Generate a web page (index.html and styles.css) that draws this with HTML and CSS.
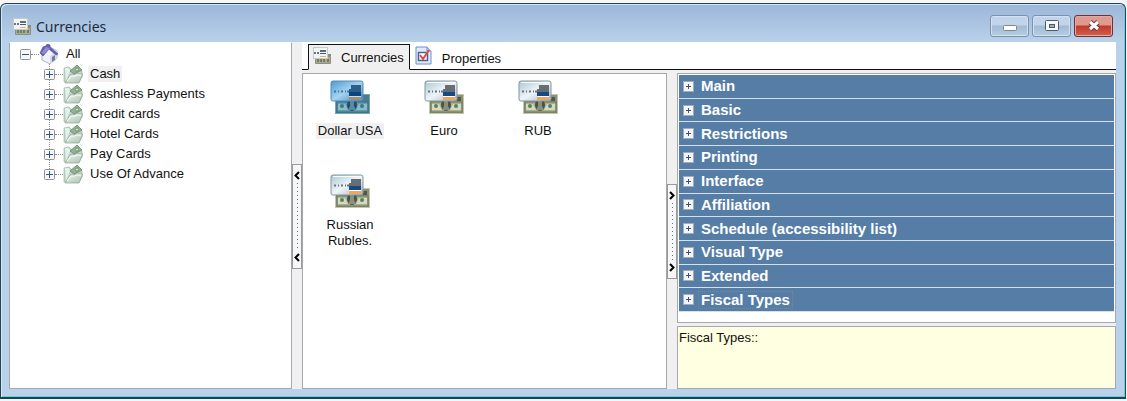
FILE: index.html
```html
<!DOCTYPE html>
<html lang="en">
<head>
<meta charset="utf-8">
<title>Currencies</title>
<link rel="stylesheet" href="styles.css">
</head>
<body>
<svg class="defs" aria-hidden="true">
  <defs>
    <linearGradient id="card" x1="0" y1="0" x2="1" y2="1"><stop offset="0" stop-color="#a9c6d4"/><stop offset=".5" stop-color="#eef5f8"/><stop offset="1" stop-color="#a9b2ba"/></linearGradient>
    <linearGradient id="cardBlue" x1="0" y1="0" x2="1" y2="1"><stop offset="0" stop-color="#4b9bd0"/><stop offset=".5" stop-color="#a6d3f1"/><stop offset="1" stop-color="#4682b2"/></linearGradient>
    <linearGradient id="leaf" x1="0" y1="0" x2="1" y2="1"><stop offset="0" stop-color="#eef5ee"/><stop offset="1" stop-color="#a9c2b0"/></linearGradient>
    <symbol id="money" viewBox="0 0 40 36">
      <rect x="5.500" y="14.500" width="34" height="19" fill="#8a917a" stroke="#c4c7ae"/>
      <rect x="7" y="22" width="31" height="10" fill="#a9b08f" stroke="#6b765e"/>
      <path d="M8 24h7l3 6H8zM37 24h-8l-3 6h11z" fill="#d3dabf"/>
      <ellipse cx="22" cy="25" rx="5" ry="6" fill="#4a524a"/><path d="M20 21h4v5l2 4h-8l2-4z" fill="#8b927c"/>
      <circle cx="12" cy="26" r="2" fill="#598058"/><circle cx="32" cy="26" r="2" fill="#598058"/>
      <path d="M33 17h4v4h-4z" fill="#4f5949"/>
      <rect x="1" y="1" width="32" height="20" rx="2" fill="url(#card)" stroke="#84979f"/>
      <path d="M3 2.500h28" stroke="#f7fbfc"/>
      <path d="M4 11.500h2m2 0h1m2 0h2m2 0h1m1 0h2" stroke="#6a747c" stroke-width="2"/>
      <path d="M21 5h10v6H21zM19 9h12v3H19z" fill="#676d74"/><path d="M19 12h12v4H19z" fill="#164a83"/><path d="M19 17h12v3H19z" fill="#eea75b"/><path d="M19 16.500h12" stroke="#fff"/>
    </symbol>
    <symbol id="moneyBlue" viewBox="0 0 40 36">
      <rect x="5.500" y="14.500" width="34" height="19" fill="#477b91" stroke="#78a5b4"/>
      <rect x="7" y="22" width="31" height="10" fill="#659bad" stroke="#3c6d85"/>
      <path d="M8 24h7l3 6H8zM37 24h-8l-3 6h11z" fill="#8bbac8"/>
      <ellipse cx="22" cy="25" rx="5" ry="6" fill="#214c6b"/><path d="M20 21h4v5l2 4h-8l2-4z" fill="#588aa2"/>
      <circle cx="12" cy="26" r="2" fill="#3b7982"/><circle cx="32" cy="26" r="2" fill="#3b7982"/>
      <rect x="1" y="1" width="32" height="20" rx="2" fill="url(#cardBlue)" stroke="#4f8eb6"/>
      <path d="M4 11.500h2m2 0h1m2 0h2m2 0h1m1 0h2" stroke="#3f76a0" stroke-width="2"/>
      <path d="M21 5h10v6H21zM19 9h12v3H19z" fill="#2e5f88"/><path d="M19 12h12v4H19z" fill="#0a4683"/><path d="M19 17h12v3H19z" fill="#a78e70"/><path d="M19 16.500h12" stroke="#bce0f5"/>
    </symbol>
    <symbol id="moneySmall" viewBox="0 0 20 18">
      <path d="M3.500 9.500h15v7h-15z" fill="#a9ac90" stroke="#8d917c"/><path d="M6 12v3m3-3v3m3-3v3m4-3v3" stroke="#636b5c" stroke-width="1.500"/>
      <rect x="1.500" y=".5" width="14" height="11" fill="#f1f4f4" stroke="#c3cacc"/>
      <path d="M2 6h6" stroke="#46515b" stroke-width="1.500" stroke-dasharray="2 1"/><path d="M8 3h6v2H8z" fill="#626c73"/><path d="M8 6h6v1H8z" fill="#315e92"/><path d="M8 9.500h6" stroke="#e2b06f"/><path d="M16 7h3v2h-3z" fill="#8a8f74"/>
    </symbol>
    <symbol id="folder" viewBox="0 0 20 20">
      <path d="M1 18V4l5-1 3 3 5-5 5 6v6l-3 5z" fill="#c3d3c6" stroke="#a3b8aa" stroke-width=".7"/>
      <path d="m7 7 7-6 5 5-8 4z" fill="#93b394" stroke="#6c8a6f" stroke-width=".8"/><circle cx="14" cy="5.500" r="1.600" fill="#d7e4cf" stroke="#60775e" stroke-width=".7"/>
      <path d="M2 4h4l1 3-4 10z" fill="#e0f3ef"/>
      <path d="m2 19 5-8h4l1-1h8l-4 9z" fill="url(#leaf)" stroke="#8aa592" stroke-width=".7"/>
      <path d="m4 17 4-5h4l1-1h5" fill="none" stroke="#fff"/>
    </symbol>
    <symbol id="plus" viewBox="0 0 11 11"><rect x=".5" y=".5" width="10" height="10" rx="1" fill="#f5f6f8" stroke="#929292"/><path d="M2 5.500h7M5.500 2v7" stroke="#34508d"/></symbol>
    <symbol id="minus" viewBox="0 0 11 11"><rect x=".5" y=".5" width="10" height="10" rx="1" fill="#f5f6f8" stroke="#929292"/><path d="M2 5.500h7" stroke="#34508d"/></symbol>
    <symbol id="box" viewBox="0 0 11 11"><path d="M0 0h11v11H0z" fill="#a3abb8"/><path d="M1 1h9v9H1z" fill="#f4f4f5"/><path d="M3 5.500h5M5.500 3v5" stroke="#3d5282"/></symbol>
  </defs>
</svg>
<main class="window">
  <header class="titlebar">
    <svg class="icon-small"><use href="#moneySmall"/></svg>
    <h1 class="title">Currencies</h1>
    <div class="controls">
      <button class="control" aria-label="Minimize"><svg viewBox="0 0 16 14"><rect x="1.500" y="6.500" width="13" height="5" rx="1" fill="#fff" stroke="#7b858f"/></svg></button>
      <button class="control" aria-label="Maximize"><svg viewBox="0 0 16 14"><rect x="1.500" y="1.500" width="13" height="10" rx="1" fill="#f6f6f6" stroke="#4e5967"/><rect x="5.500" y="5.500" width="5" height="3" fill="#94aec8" stroke="#4e5967"/></svg></button>
      <button class="control close" aria-label="Close"><svg viewBox="0 0 16 14"><path d="m4 3 8 7m0-7-8 7" stroke="#633d46" stroke-width="5"/><path d="m4 3 8 7m0-7-8 7" stroke="#fff" stroke-width="3"/></svg></button>
    </div>
  </header>
  <div class="content">
    <nav class="panel tree" aria-label="Currency groups">
      <div class="tree-row">
        <button class="expander" aria-label="Collapse All"><svg><use href="#minus"/></svg></button><span class="dots"></span>
        <svg class="tree-icon" viewBox="0 0 20 20"><path d="M3 9v7l8 4 7-6V7l-7-4z" fill="#f1f2f8" stroke="#9197b5" stroke-width=".7"/><path d="m11 12 7-6v8l-7 6z" fill="#d6d9e8"/><path d="m13 13 3-2v5l-3 2z" fill="#777b9b"/><path d="M1 9 4 3l3-1 1-2 3 1v2l8 7-2 1-7-6-6 7z" fill="#635fae" stroke="#5554a0" stroke-width=".7"/><path d="m2 9 5-6 4 1-6 6z" fill="#918cd1"/></svg>
        <span class="label">All</span>
      </div>
      <ul class="branch">
        <li class="tree-row"><button class="expander" aria-label="Expand Cash"><svg><use href="#plus"/></svg></button><span class="dots"></span><svg class="tree-icon"><use href="#folder"/></svg><span class="label selected">Cash</span></li>
        <li class="tree-row"><button class="expander" aria-label="Expand Cashless Payments"><svg><use href="#plus"/></svg></button><span class="dots"></span><svg class="tree-icon"><use href="#folder"/></svg><span class="label">Cashless Payments</span></li>
        <li class="tree-row"><button class="expander" aria-label="Expand Credit cards"><svg><use href="#plus"/></svg></button><span class="dots"></span><svg class="tree-icon"><use href="#folder"/></svg><span class="label">Credit cards</span></li>
        <li class="tree-row"><button class="expander" aria-label="Expand Hotel Cards"><svg><use href="#plus"/></svg></button><span class="dots"></span><svg class="tree-icon"><use href="#folder"/></svg><span class="label">Hotel Cards</span></li>
        <li class="tree-row"><button class="expander" aria-label="Expand Pay Cards"><svg><use href="#plus"/></svg></button><span class="dots"></span><svg class="tree-icon"><use href="#folder"/></svg><span class="label">Pay Cards</span></li>
        <li class="tree-row"><button class="expander" aria-label="Expand Use Of Advance"><svg><use href="#plus"/></svg></button><span class="dots"></span><svg class="tree-icon"><use href="#folder"/></svg><span class="label">Use Of Advance</span></li>
      </ul>
    </nav>
    <div class="splitter splitter-left">
      <button class="grip" aria-label="Hide groups"><svg class="arrow" viewBox="0 0 6 9"><path d="M5 1 1.500 4.500 5 8" fill="none" stroke="#000" stroke-width="2"/></svg><span class="grip-dots"></span><svg class="arrow" viewBox="0 0 6 9"><path d="M5 1 1.500 4.500 5 8" fill="none" stroke="#000" stroke-width="2"/></svg></button>
    </div>
    <section class="main">
      <div class="tabs" role="tablist">
        <button class="tab active" role="tab" aria-selected="true"><svg class="icon-small"><use href="#moneySmall"/></svg>Currencies</button>
        <button class="tab" role="tab" aria-selected="false"><svg class="icon-page" viewBox="0 0 17 19"><path d="M1 1h11l4 4v13H1z" fill="#e1ecfb" stroke="#6b91ce"/><path d="M12 1v4h4" fill="#b8d0f3" stroke="#6b91ce"/><rect x="3.500" y="6.500" width="9" height="8" fill="#fff" stroke="#4a5f9c" stroke-width="1.500"/><path d="m5 9 3 4 6-9" fill="none" stroke="#e54a35" stroke-width="2"/></svg>Properties</button>
      </div>
      <div class="work">
        <ul class="panel items">
          <li class="item"><svg class="item-icon"><use href="#moneyBlue"/></svg><span class="label selected">Dollar USA</span></li>
          <li class="item"><svg class="item-icon"><use href="#money"/></svg><span class="label">Euro</span></li>
          <li class="item"><svg class="item-icon"><use href="#money"/></svg><span class="label">RUB</span></li>
          <li class="item"><svg class="item-icon"><use href="#money"/></svg><span class="label">Russian Rubles.</span></li>
        </ul>
        <div class="splitter splitter-right">
          <button class="grip" aria-label="Hide properties"><svg class="arrow" viewBox="0 0 6 9"><path d="M1 1 4.500 4.500 1 8" fill="none" stroke="#000" stroke-width="2"/></svg><span class="grip-dots"></span><svg class="arrow" viewBox="0 0 6 9"><path d="M1 1 4.500 4.500 1 8" fill="none" stroke="#000" stroke-width="2"/></svg></button>
        </div>
        <div class="inspector">
          <div class="panel groups">
            <div class="group-list">
              <button class="group"><svg class="box"><use href="#box"/></svg><span>Main</span></button>
              <button class="group"><svg class="box"><use href="#box"/></svg><span>Basic</span></button>
              <button class="group"><svg class="box"><use href="#box"/></svg><span>Restrictions</span></button>
              <button class="group"><svg class="box"><use href="#box"/></svg><span>Printing</span></button>
              <button class="group"><svg class="box"><use href="#box"/></svg><span>Interface</span></button>
              <button class="group"><svg class="box"><use href="#box"/></svg><span>Affiliation</span></button>
              <button class="group"><svg class="box"><use href="#box"/></svg><span>Schedule (accessibility list)</span></button>
              <button class="group"><svg class="box"><use href="#box"/></svg><span>Visual Type</span></button>
              <button class="group"><svg class="box"><use href="#box"/></svg><span>Extended</span></button>
              <button class="group"><svg class="box"><use href="#box"/></svg><span class="focused">Fiscal Types</span></button>
            </div>
          </div>
          <div class="panel hint">Fiscal Types::</div>
        </div>
      </div>
    </section>
  </div>
</main>
</body>
</html>
```
FILE: styles.css
```css
* { box-sizing: border-box; }
body {
  margin: 0;
  min-height: 100vh;
  padding: 3px 1px 2px 0;
  display: flex;
  background: #f4f6f7;
  font: 13px/16px "Liberation Sans", Arial, sans-serif;
  color: #111;
}
button { font: inherit; color: inherit; border: 0; padding: 0; margin: 0; background: none; }
ul { list-style: none; margin: 0; padding: 0; }
svg { display: block; flex: none; }
.defs { position: absolute; width: 0; height: 0; }

.window {
  flex: 1;
  min-width: 0;
  display: flex;
  flex-direction: column;
  padding: 0 9px 8px 8px;
  border: 1px solid #26434f;
  border-bottom: 2px solid #174454;
  border-radius: 6px 6px 0 0;
  background: linear-gradient(#9bb7d8, #b9d1ea 38px, #b9d1ea);
  box-shadow: inset 1px 1px #d4e7f8, inset -1px -1px #66cfe6;
}
.titlebar { display: flex; align-items: flex-start; height: 38px; padding: 11px 3px 0 3px; }
.title { flex: 1; margin: 0 0 0 4px; font: 14px/24px "Noto Sans", "Open Sans", sans-serif; color: #1b2a3d; }
.titlebar .icon-small { margin-top: 3px; }
.icon-small { width: 20px; height: 18px; }
.controls { display: flex; gap: 3px; }
.control {
  width: 39px;
  height: 22px;
  display: grid;
  place-items: center;
  border: 1px solid #7b91ad;
  border-radius: 3px;
  background: linear-gradient(#c2d4e9 45%, #a3bad5 50%, #b6cde5);
  box-shadow: inset 0 0 0 1px #d3e1f0;
}
.control svg { width: 16px; height: 14px; }
.close { border-color: #70303a; background: linear-gradient(#df9a8d 45%, #c0392a 50%, #d2604d); box-shadow: inset 0 0 0 1px #e2aaa2; }

.content { flex: 1; display: grid; grid-template-columns: 283fr 10px 814fr; background: #f0f0f0; }
.panel { background: #fff; border: 1px solid #a5a8ae; }

.tree { padding: 1px 10px; border-top-color: #fff; }
.tree-row { display: flex; align-items: center; height: 20px; }
.branch { padding-left: 24px; background: repeating-linear-gradient(#999 0 1px, #fff 1px 2px) 29px 0 / 1px 110px no-repeat; }
.expander, .expander svg, .box { width: 11px; height: 11px; }
.dots { width: 8px; border-top: 1px dotted #888; }
.tree-icon { width: 20px; height: 20px; }
.label { padding: 0 2px; }
.tree .label { margin-left: 5px; }
.selected { background: #f0f0f0; }

.splitter { background: #f0f0f0; }
.splitter-left { padding-top: 122px; }
.splitter-right { padding-top: 111px; }
.grip {
  width: 100%;
  height: 105px;
  display: flex;
  flex-direction: column;
  align-items: center;
  justify-content: space-between;
  padding: 6px 0;
  border: 1px solid #999;
  background: #f7f7f7;
}
.splitter-right .grip { height: 95px; }
.arrow { width: 6px; height: 9px; }
.grip-dots { flex: 1; width: 1px; margin: 3px 0; background: repeating-linear-gradient(#3e7ca5 0 1px, #f7f7f7 1px 4px); }

.main { display: flex; flex-direction: column; min-width: 0; }
.tabs { display: flex; height: 28px; padding: 2px 0 0 6px; background: #fff; border-bottom: 1px solid #111; }
.tab { display: flex; align-items: center; padding: 4px 5px 0; gap: 10px; }
.tab.active {
  height: 26px;
  padding: 2px 5px 0 3px;
  gap: 9px;
  border: 1px solid #111;
  border-bottom-color: #f0f0f0;
  background: #f0f0f0;
}
.active .icon-small { margin-top: -4px; }
.icon-page { width: 17px; height: 19px; margin-top: -6px; }
.work { flex: 1; display: grid; grid-template-columns: 365fr 10px 439fr; padding-top: 3px; }
.items { display: flex; flex-wrap: wrap; align-content: flex-start; padding-top: 6px; }
.item { width: 94px; height: 94px; display: flex; flex-direction: column; align-items: center; text-align: center; }
.item-icon { width: 40px; height: 36px; margin-bottom: 7px; }
.item .label { max-width: 64px; }
.item .selected { max-width: none; }

.inspector { display: flex; flex-direction: column; gap: 3px; }
.groups { flex: 1; padding: 1px; }
.group-list { display: grid; grid-auto-rows: 1fr; height: 237px; }
.group {
  display: flex;
  align-items: center;
  gap: 5px;
  padding-left: 4px;
  border-bottom: 1px solid #d3e1ee;
  background: #557da6;
  color: #fff;
  font-size: 15px;
  font-weight: bold;
}
.group span { padding: 0 2px; }
.focused { outline: 1px dotted #7d8791; }
.hint { height: 63px; padding: 3px 1px; background: #ffffe1; }
```
